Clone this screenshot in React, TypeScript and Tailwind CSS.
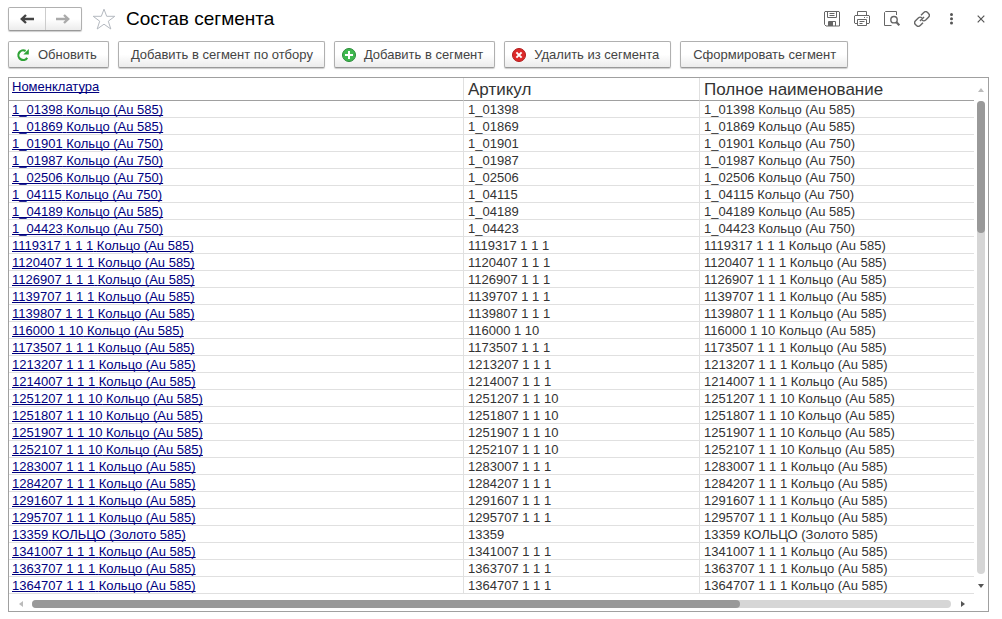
import React from "react";

interface Item {
  article: string;
  kind: string;
}

const ring585 = "Кольцо (Au 585)";
const ring750 = "Кольцо (Au 750)";

const items: Item[] = [
  { article: "1_01398", kind: ring585 },
  { article: "1_01869", kind: ring585 },
  { article: "1_01901", kind: ring750 },
  { article: "1_01987", kind: ring750 },
  { article: "1_02506", kind: ring750 },
  { article: "1_04115", kind: ring750 },
  { article: "1_04189", kind: ring585 },
  { article: "1_04423", kind: ring750 },
  { article: "1119317 1 1 1", kind: ring585 },
  { article: "1120407 1 1 1", kind: ring585 },
  { article: "1126907 1 1 1", kind: ring585 },
  { article: "1139707 1 1 1", kind: ring585 },
  { article: "1139807 1 1 1", kind: ring585 },
  { article: "116000 1 10", kind: ring585 },
  { article: "1173507 1 1 1", kind: ring585 },
  { article: "1213207 1 1 1", kind: ring585 },
  { article: "1214007 1 1 1", kind: ring585 },
  { article: "1251207 1 1 10", kind: ring585 },
  { article: "1251807 1 1 10", kind: ring585 },
  { article: "1251907 1 1 10", kind: ring585 },
  { article: "1252107 1 1 10", kind: ring585 },
  { article: "1283007 1 1 1", kind: ring585 },
  { article: "1284207 1 1 1", kind: ring585 },
  { article: "1291607 1 1 1", kind: ring585 },
  { article: "1295707 1 1 1", kind: ring585 },
  { article: "13359", kind: "КОЛЬЦО (Золото 585)" },
  { article: "1341007 1 1 1", kind: ring585 },
  { article: "1363707 1 1 1", kind: ring585 },
  { article: "1364707 1 1 1", kind: ring585 },
];

const RefreshIcon = () => (
  <svg width="14" height="14" viewBox="0 0 14 14" fill="none" aria-hidden="true">
    <path d="M11.2 9.800A4.800 4.800 0 1 1 9.600 3" stroke="#2fa336" strokeWidth="2.2" />
    <path d="M12.8 1v5.500H7.300z" fill="#2fa336" />
  </svg>
);

const AddIcon = () => (
  <svg width="14" height="14" viewBox="0 0 14 14" aria-hidden="true">
    <circle cx="7" cy="7" r="6.5" fill="#3fb950" stroke="#2a8a38" />
    <path d="M7 3v8M3 7h8" stroke="#fff" strokeWidth="2" />
  </svg>
);

const RemoveIcon = () => (
  <svg width="14" height="14" viewBox="0 0 14 14" aria-hidden="true">
    <circle cx="7" cy="7" r="6.5" fill="#dc2a2a" stroke="#b01c1c" />
    <path d="M4.4 4.4l5.2 5.2M9.6 4.4L4.4 9.6" stroke="#fff" strokeWidth="2" />
  </svg>
);

const ArrowIcon = ({ flipped = false }: { flipped?: boolean }) => (
  <svg width="14" height="10" viewBox="0 0 14 10" fill="none" stroke="currentColor" strokeWidth="2.4" aria-hidden="true">
    <path d={flipped ? "M0 5h11.5M8 1l4.2 4L8 9" : "M14 5H2.5M6 1L1.8 5 6 9"} />
  </svg>
);

const StarIcon = () => (
  <svg width="24" height="22" viewBox="0 0 24 22" fill="none" stroke="#b4b9c0" aria-hidden="true">
    <path d="M12 1.2l2.7 7.1h8.1l-6.5 4.9 2.5 7.8-6.8-4.8L5.2 21l2.5-7.8-6.5-4.9h8.1z" />
  </svg>
);

const SaveIcon = () => (
  <svg width="16" height="16" viewBox="0 0 16 16" fill="none" stroke="#666" aria-hidden="true">
    <path d="M1 .5h14l.5.5v14H2L.5 13.5V1z" />
    <path d="M3.5.5v6h9v-6M5.5 2.5h5M5.5 4.5h5M4.5 15v-4.5h7V15" />
    <path d="M5 11h4v4H5z" fill="#666" stroke="none" />
  </svg>
);

const PrintIcon = () => (
  <svg width="16" height="16" viewBox="0 0 16 16" fill="none" stroke="#666" aria-hidden="true">
    <path d="M3.5 4.5v-4h9v4M3.5 12.5H1l-.5-.5V5l.5-.5h14l.5.5v7l-.5.5h-2.5" />
    <path d="M3.5 8.5h9v6h-9zM5.5 10.5h5M5.5 12.5h3M10 6.5h1M12.5 6.5h1" />
  </svg>
);

const PreviewIcon = () => (
  <svg width="16" height="16" viewBox="0 0 16 16" fill="none" stroke="#666" aria-hidden="true">
    <path d="M12.5 4V.5h-11l-1 1v13h7" />
    <circle cx="10" cy="8.7" r="3.2" strokeWidth="1.4" />
    <path d="M12.3 11l3 3.3" strokeWidth="2.2" />
  </svg>
);

const LinkIcon = () => (
  <svg width="16" height="16" viewBox="0 0 16 16" fill="none" stroke="#666" strokeWidth="1.4" aria-hidden="true">
    <path d="M7 4.3l2.8-2.8a2.7 2.7 0 0 1 3.8 0l.9.9a2.7 2.7 0 0 1 0 3.8L11.7 9A2.7 2.7 0 0 1 8 9" />
    <path d="M9 11.7l-2.8 2.8a2.7 2.7 0 0 1-3.8 0l-.9-.9a2.7 2.7 0 0 1 0-3.8L4.3 7A2.7 2.7 0 0 1 8 7" />
    <path d="M6 10l4-4" />
  </svg>
);

const MoreIcon = () => (
  <svg width="16" height="16" viewBox="0 0 16 16" fill="#555" aria-hidden="true">
    <circle cx="7.5" cy="3.5" r="1.5" />
    <circle cx="7.5" cy="7.8" r="1.5" />
    <circle cx="7.5" cy="12.1" r="1.5" />
  </svg>
);

const CloseIcon = () => (
  <svg width="8" height="8" viewBox="0 0 8 8" fill="none" stroke="#555" strokeWidth="1.2" aria-hidden="true">
    <path d="M.7.7l6.6 6.6M7.3.7L.7 7.3" />
  </svg>
);

const windowActions = [
  { label: "Сохранить", icon: <SaveIcon /> },
  { label: "Печать", icon: <PrintIcon /> },
  { label: "Просмотр", icon: <PreviewIcon /> },
  { label: "Ссылка", icon: <LinkIcon /> },
  { label: "Ещё", icon: <MoreIcon /> },
];

interface ToolbarButtonProps {
  icon?: React.ReactNode;
  children: React.ReactNode;
}

const ToolbarButton = ({ icon, children }: ToolbarButtonProps) => (
  <button
    className={`flex h-[27px] items-center gap-2 whitespace-nowrap rounded-xs border border-[#b0b0b0] border-b-[#999] bg-linear-to-b from-white from-50% to-[#ececec] text-[13px] text-[#444] shadow-[0_1px_1px_#ccc] ${
      icon ? "pr-[11px] pl-[7px]" : "pr-[11px] pl-3"
    }`}
  >
    {icon}
    {children}
  </button>
);

const ScrollArrow = ({ points, active = false }: { points: string; active?: boolean }) => (
  <svg width="6" height="6" viewBox="0 0 6 6" className={active ? "fill-[#555]" : "fill-[#bbb]"} aria-hidden="true">
    <polygon points={points} />
  </svg>
);

export default function App() {
  return (
    <div className="min-h-screen bg-white pt-[7px] pr-[13px] pb-2 pl-2 font-['Liberation_Sans',Arial,sans-serif] text-[#333]">
      <header className="flex h-6 items-center">
        <div className="flex h-6 w-[74px] shrink-0 rounded-xs border border-[#b0b0b0] border-b-[#999] bg-linear-to-b from-white from-50% to-[#ececec] shadow-[0_1px_1px_#ccc]">
          <button aria-label="Назад" className="flex flex-1 items-center justify-center border-r border-[#ccc] text-[#444]">
            <ArrowIcon />
          </button>
          <button aria-label="Вперёд" className="flex flex-1 items-center justify-center text-[#aaa]">
            <ArrowIcon flipped />
          </button>
        </div>
        <button aria-label="В избранное" className="ml-[10px]">
          <StarIcon />
        </button>
        <h1 className="ml-[10px] text-[19px] leading-6 text-black">Состав сегмента</h1>
        <div className="ml-auto flex items-center gap-[14px]">
          {windowActions.map((action) => (
            <button key={action.label} aria-label={action.label}>
              {action.icon}
            </button>
          ))}
        </div>
        <button aria-label="Закрыть" className="ml-[17px] pr-1">
          <CloseIcon />
        </button>
      </header>

      <div className="mt-[10px] flex gap-[9px]">
        <ToolbarButton icon={<RefreshIcon />}>Обновить</ToolbarButton>
        <ToolbarButton>Добавить в сегмент по отбору</ToolbarButton>
        <ToolbarButton icon={<AddIcon />}>Добавить в сегмент</ToolbarButton>
        <ToolbarButton icon={<RemoveIcon />}>Удалить из сегмента</ToolbarButton>
        <ToolbarButton>Сформировать сегмент</ToolbarButton>
      </div>

      <main className="mt-[9px] border border-[#a0a0a0]">
        <div className="flex">
          <div className="min-w-0 flex-1 pb-[3px]">
            <table className="w-full table-fixed border-separate border-spacing-0 text-left text-[13px] leading-[15px]">
              <colgroup>
                <col className="w-[455px]" />
                <col className="w-[236px]" />
                <col />
              </colgroup>
              <thead>
                <tr className="h-[23px] *:border-b *:border-b-[#a0a0a0] *:p-0 *:pt-px *:font-normal">
                  <th className="border-r border-r-[#e0e0e0] pl-[3px]! align-top">
                    <a href="#" className="text-[#00007f] underline [text-decoration-skip-ink:none]">
                      Номенклатура
                    </a>
                  </th>
                  <th className="border-r border-r-[#e0e0e0] pl-1! text-[17px] leading-5">Артикул</th>
                  <th className="pl-1! text-[17px] leading-5">Полное наименование</th>
                </tr>
              </thead>
              <tbody>
                {items.map((item) => (
                  <tr key={item.article} className="h-[17px] *:truncate *:border-b *:border-[#e0e0e0] *:p-0 *:pt-px">
                    <td className="border-r pl-[3px]!">
                      <a href="#" className="text-[#00007f] underline [text-decoration-skip-ink:none]">
                        {item.article} {item.kind}
                      </a>
                    </td>
                    <td className="border-r pl-1!">{item.article}</td>
                    <td className="pl-1!">
                      {item.article} {item.kind}
                    </td>
                  </tr>
                ))}
              </tbody>
            </table>
          </div>

          <div className="flex w-[14px] shrink-0 flex-col items-center">
            <div className="flex h-[23px] items-center">
              <ScrollArrow points="0,5 6,5 3,1" />
            </div>
            <div className="w-2 flex-1 rounded-full bg-[#d6d6d6]">
              <div className="h-[28%] rounded-full bg-[#999]" />
            </div>
            <div className="flex h-[23px] items-center">
              <ScrollArrow points="0,1 6,1 3,5" active />
            </div>
          </div>
        </div>

        <div className="flex h-[14px] items-center pr-[14px]">
          <div className="flex w-[23px] justify-center">
            <ScrollArrow points="5,0 5,6 1,3" />
          </div>
          <div className="h-2 flex-1 rounded-full bg-[#d6d6d6]">
            <div className="h-2 w-[77%] rounded-full bg-[#999]" />
          </div>
          <div className="flex w-[23px] justify-center">
            <ScrollArrow points="1,0 1,6 5,3" active />
          </div>
        </div>
      </main>
    </div>
  );
}
